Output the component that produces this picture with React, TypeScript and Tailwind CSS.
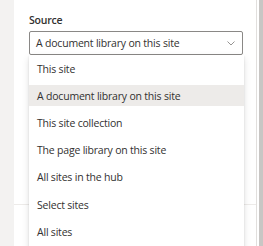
import React from "react";

const items = [
  "This site",
  "A document library on this site",
  "This site collection",
  "The page library on this site",
  "All sites in the hub",
  "Select sites",
  "All sites",
];

export default function App() {
  return (
    <div
      className="flex w-[263px] h-[246px] overflow-hidden bg-[#f3f2f1] text-[#323130]"
      style={{ fontFamily: '"Open Sans", "Noto Sans", sans-serif' }}
    >
      <div className="w-[14px] shrink-0" />
      <div className="relative w-[243px] shrink-0 bg-white border-r border-[#e1dfdd]">
        <div className="pl-[15px] pr-[13px] pt-[13px]">
          <div className="text-[10.5px] leading-[14px] font-semibold tracking-[-0.2px]">Source</div>
          <div className="mt-[4px] h-[24px] w-[214px] border border-[#8a8886] rounded-[2px] flex items-center pl-[6px] pr-[7px]">
            <span className="flex-1 text-[10.5px] leading-[14px] tracking-[-0.2px]">A document library on this site</span>
            <svg width="8" height="5" viewBox="0 0 8 5" className="shrink-0">
              <path d="M0.5 0.5 L4 4 L7.5 0.5" fill="none" stroke="#8a8886" strokeWidth="0.9" />
            </svg>
          </div>
        </div>
        <div className="mt-[149px] border-t border-[#edebe9]" />
        <div className="absolute left-[15px] top-[55px] w-[215px] bg-white shadow-[0_3px_7px_rgba(0,0,0,0.13),0_0.6px_1.8px_rgba(0,0,0,0.11)] pb-[10px]">
          {items.map((t, i) => (
            <div key={t} className="h-[27.2px] flex items-center">
              <div
                className={
                  "w-full h-[21px] flex items-center pl-[8px] text-[10.5px] leading-[14px] tracking-[-0.2px] " +
                  (i === 1 ? "bg-[#edebe9]" : "")
                }
              >
                {t}
              </div>
            </div>
          ))}
        </div>
      </div>
      <div className="w-[2px] shrink-0 bg-white" />
      <div className="flex-1 bg-[#c8c6c4]" />
    </div>
  );
}
